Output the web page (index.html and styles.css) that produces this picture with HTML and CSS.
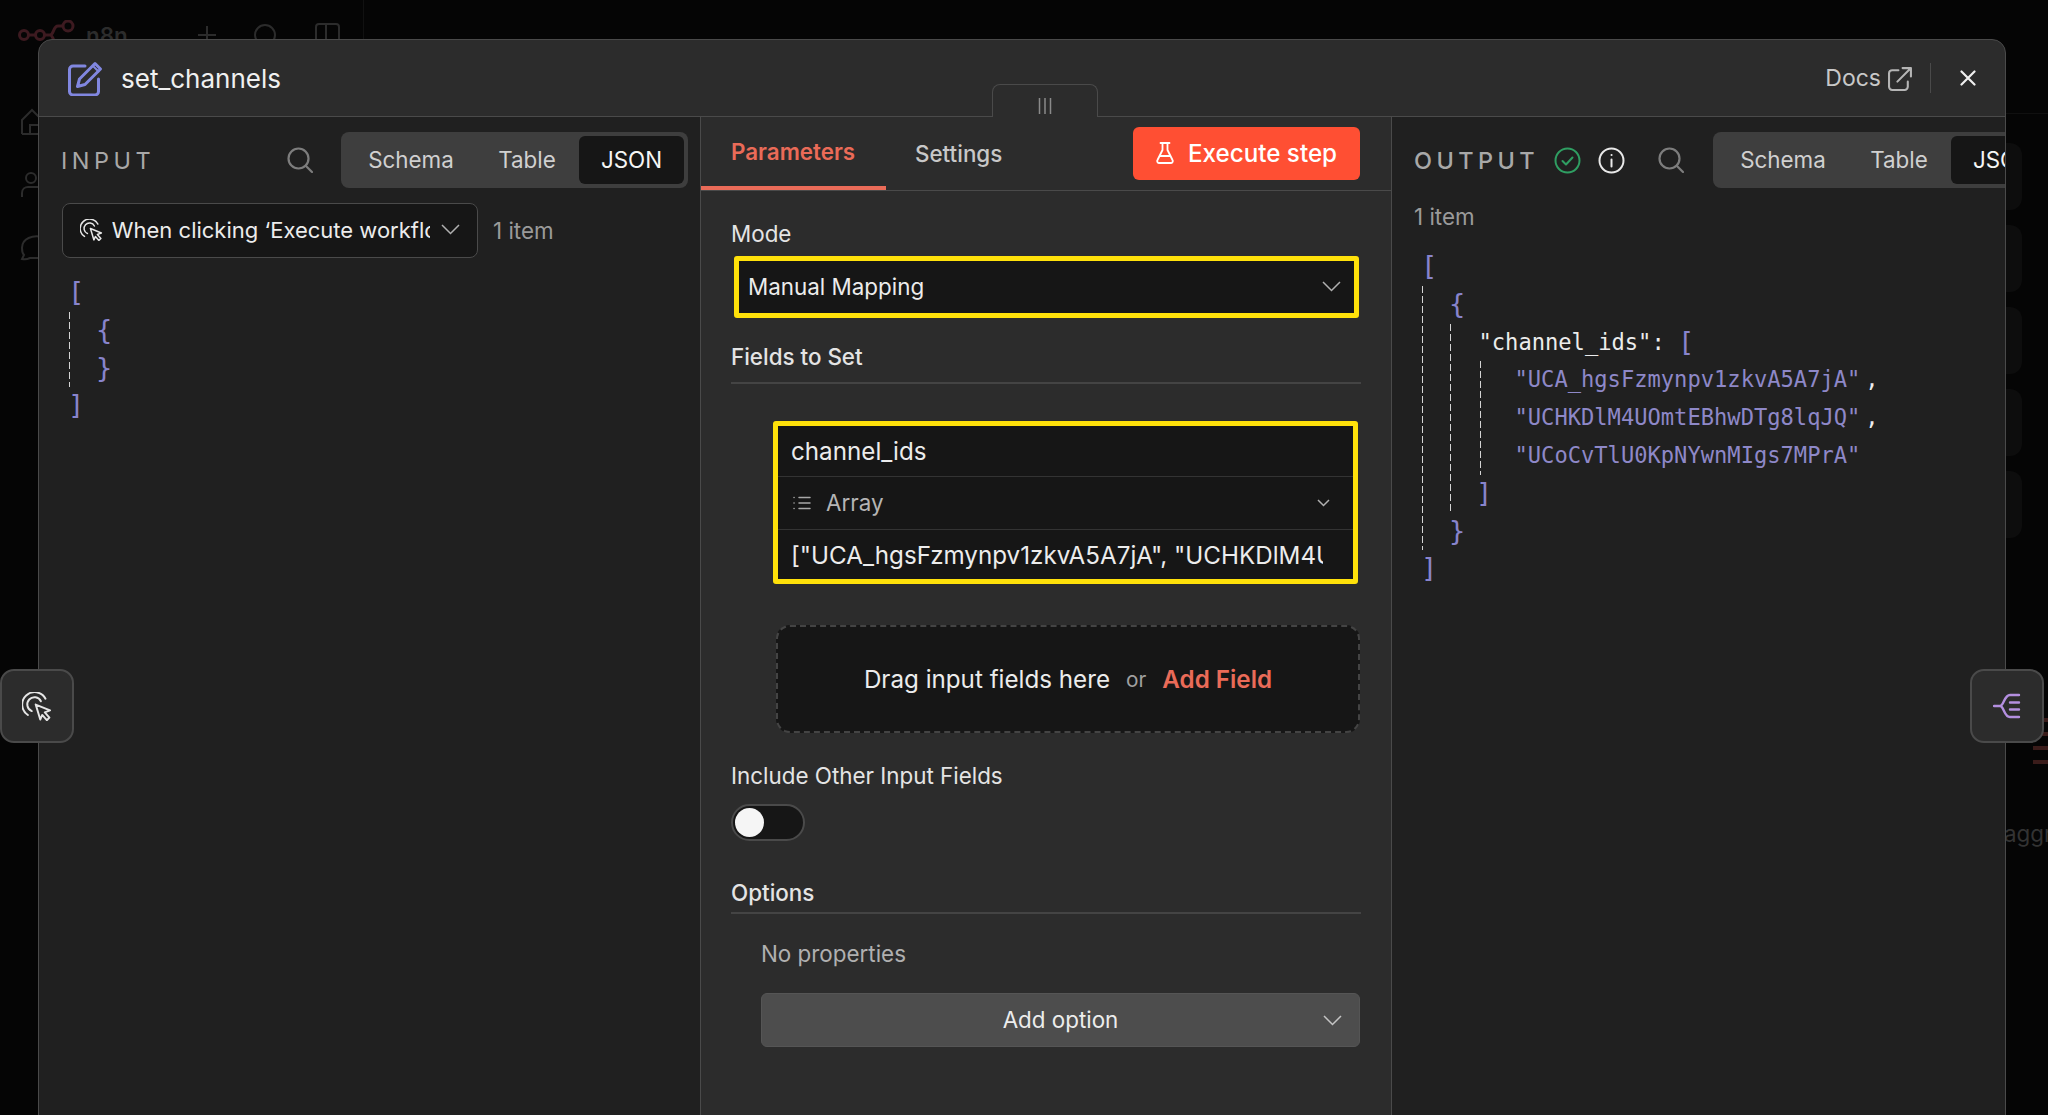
FILE: index.html
```html
<!DOCTYPE html>
<html lang="en">
<head>
    <meta charset="UTF-8">
    <meta name="viewport" content="width=device-width, initial-scale=1.0">
    <title>set_channels</title>
    <link rel="stylesheet" href="styles.css">
</head>
<body>
    <div class="backdrop">
        <div class="ghost-top">
            <svg class="ghost-logo" width="58" height="30" viewBox="0 0 58 30" fill="none" stroke="#3d1a20" stroke-width="3">
                <circle cx="6" cy="15" r="4.500"/><circle cx="22" cy="15" r="4.500"/><circle cx="50" cy="6" r="5"/>
                <path d="M11 15h6M27 15h5c4 0 3-9 8-9h5M32 15c4 0 3 10 8 10h5"/>
            </svg>
            <span class="ghost-name">n8n</span>
            <svg class="ghost-plus" width="20" height="20" viewBox="0 0 20 20" stroke="#2c2c2c" stroke-width="2"><path d="M10 1v18M1 10h18"/></svg>
            <svg class="ghost-search" width="24" height="24" viewBox="0 0 24 24" fill="none" stroke="#2c2c2c" stroke-width="2"><circle cx="12" cy="12" r="10"/></svg>
            <svg class="ghost-panel" width="26" height="24" viewBox="0 0 26 24" fill="none" stroke="#2c2c2c" stroke-width="2"><rect x="1" y="1" width="23" height="30" rx="3"/><path d="M11 1v30"/></svg>
        </div>
        <div class="ghost-side">
            <svg width="22" height="28" viewBox="0 0 22 28" fill="none" stroke="#2c2c2c" stroke-width="2"><path d="M2 26V12L12 2l10 10M2 26h20M10 26v-9h12"/></svg>
            <svg width="22" height="28" viewBox="0 0 22 28" fill="none" stroke="#2c2c2c" stroke-width="2"><circle cx="11" cy="7" r="5"/><path d="M2 26v-4c0-4 3-6 6-6h14"/></svg>
            <svg width="22" height="28" viewBox="0 0 22 28" fill="none" stroke="#2c2c2c" stroke-width="2"><path d="M22 3c-9-2-20 1-20 11 0 4 1 6 2 7l-2 4c4 1 6 0 8-1h12"/></svg>
        </div>
        <div class="ghost-rule"></div>
        <div class="ghost-cards">
            <div class="ghost-card"></div>
            <div class="ghost-card"></div>
            <div class="ghost-card"></div>
            <div class="ghost-card"></div>
            <div class="ghost-card"></div>
        </div>
        <div class="ghost-lines">
            <div></div>
            <div></div>
            <div></div>
            <div></div>
        </div>
        <div class="ghost-text">aggr</div>
    </div>

    <div class="modal">
        <header class="modal-head">
            <svg class="node-icon" width="36" height="36" viewBox="0 0 36 36" fill="none" stroke="#8187e0" stroke-width="3" stroke-linejoin="round" stroke-linecap="round">
                <path d="M17 6H5a3.500 3.500 0 0 0-3.500 3.500v22A3.500 3.500 0 0 0 5 35h22a3.500 3.500 0 0 0 3.500-3.500V19"/>
                <path d="M27 3.500 32.500 9 17 24.500l-7.500 2 2-7.500Z"/>
                <path d="M25 6l5.500 5.500" stroke-width="2"/>
            </svg>
            <div class="node-name">set_channels</div>
            <div class="docs">Docs</div>
            <svg class="docs-icon" width="25" height="25" viewBox="0 0 24 24" fill="none" stroke="#b5b5b5" stroke-width="2" stroke-linecap="round" stroke-linejoin="round">
                <path d="M10 4H4a3 3 0 0 0-3 3v13a3 3 0 0 0 3 3h12a3 3 0 0 0 3-3v-5"/>
                <path d="M9 15 22 2M14 2h8v8"/>
            </svg>
            <div class="head-divider"></div>
            <svg class="close-icon" width="16" height="16" viewBox="0 0 16 16" stroke="#f0f0f0" stroke-width="2.200" stroke-linecap="round"><path d="M1.500 1.500l13 13M14.500 1.500l-13 13"/></svg>
        </header>

        <div class="drag-tab">
            <svg width="14" height="16" viewBox="0 0 14 16" stroke="#8a8a8a" stroke-width="1.500"><path d="M1.500 0v16M7 0v16M12.500 0v16"/></svg>
        </div>

        <div class="modal-body">
            <section class="panel panel-input">
                <div class="panel-head">
                    <div class="panel-label">INPUT</div>
                    <svg class="search-icon" width="26" height="26" viewBox="0 0 26 26" fill="none" stroke="#7d7d7d" stroke-width="2.200" stroke-linecap="round"><circle cx="11.500" cy="11.500" r="10"/><path d="M19 19l6 6"/></svg>
                    <div class="view-tabs">
                        <div class="view-tab view-tab-schema">Schema</div>
                        <div class="view-tab view-tab-table">Table</div>
                        <div class="view-tab active">JSON</div>
                    </div>
                </div>
                <div class="source-row">
                    <div class="source-select">
                        <svg class="trigger-icon" width="23" height="22" viewBox="0 0 23 22" fill="none" stroke="#e6e6e6" stroke-width="1.500" stroke-linecap="round" stroke-linejoin="round">
                            <path d="M4.500 17.500A9.500 9.500 0 1 1 18 5"/>
                            <path d="M7.500 14.500A5.500 5.500 0 1 1 14.500 7"/>
                            <path d="M10.500 9.500 21.500 14l-4 1.500 3.500 4-2 2-3.500-4-1.500 3.500Z"/>
                        </svg>
                        <div class="source-text">When clicking ‘Execute workflow’</div>
                        <svg class="chevron" width="19" height="11" viewBox="0 0 19 11" fill="none" stroke="#b0b0b0" stroke-width="1.500"><path d="M1 1l8.500 8.500L18 1"/></svg>
                    </div>
                    <div class="item-count">1 item</div>
                </div>
                <div class="json">
                    <div class="jline"><span class="jb">[</span></div>
                    <div class="jblock">
                        <div class="jline"><span class="jb">{</span></div>
                        <div class="jline"><span class="jb">}</span></div>
                    </div>
                    <div class="jline"><span class="jb">]</span></div>
                </div>
            </section>

            <section class="panel panel-main">
                <div class="main-tabs">
                    <div class="main-tab active">Parameters</div>
                    <div class="main-tab">Settings</div>
                    <div class="execute">
                        <svg width="18" height="22" viewBox="0 0 18 22" fill="none" stroke="#fff" stroke-width="1.800" stroke-linejoin="round" stroke-linecap="round">
                            <path d="M4.500 1h9M6.500 1v7L1.500 18a2 2 0 0 0 2 3h11a2 2 0 0 0 2-3l-5-10V1M4 14h10"/>
                        </svg>
                        <span>Execute step</span>
                    </div>
                </div>
                <div class="params">
                    <div class="param-label label-mode">Mode</div>
                    <div class="mode-select">
                        <span>Manual Mapping</span>
                        <svg class="chevron" width="19" height="11" viewBox="0 0 19 11" fill="none" stroke="#b0b0b0" stroke-width="1.500"><path d="M1 1l8.500 8.500L18 1"/></svg>
                    </div>
                    <div class="section-label label-fields">Fields to Set</div>
                    <div class="field-box">
                        <div class="field-row field-name">channel_ids</div>
                        <div class="field-row field-type">
                            <svg width="18" height="14" viewBox="0 0 18 14" stroke="#a8a8a8" stroke-width="1.500" stroke-linecap="round"><path d="M6 1.500h11M6 7h11M6 12.500h11M1 1.500h.1M1 7h.1M1 12.500h.1"/></svg>
                            <span class="type-name">Array</span>
                            <svg class="type-chevron" width="13" height="8" viewBox="0 0 13 8" fill="none" stroke="#b0b0b0" stroke-width="1.500"><path d="M1 1l5.500 5.500L12 1"/></svg>
                        </div>
                        <div class="field-row field-value"><span>["UCA_hgsFzmynpv1zkvA5A7jA", "UCHKDlM4UOmtEBhwDTg8lqJQ", "UCoCvTlU0KpNYwnMIgs7MPrA"]</span></div>
                    </div>
                    <div class="dropzone">
                        <span class="drop-text">Drag input fields here</span>
                        <span class="drop-or">or</span>
                        <span class="drop-add">Add Field</span>
                    </div>
                    <div class="param-label label-include">Include Other Input Fields</div>
                    <div class="toggle"><div class="knob"></div></div>
                    <div class="section-label label-options">Options</div>
                    <div class="no-props">No properties</div>
                    <div class="add-option">
                        <span>Add option</span>
                        <svg class="chevron" width="19" height="11" viewBox="0 0 19 11" fill="none" stroke="#c4c4c4" stroke-width="1.500"><path d="M1 1l8.500 8.500L18 1"/></svg>
                    </div>
                </div>
            </section>

            <section class="panel panel-output">
                <div class="panel-head">
                    <div class="panel-label label-output">OUTPUT</div>
                    <svg class="ok-icon" width="27" height="27" viewBox="0 0 27 27" fill="none" stroke="#2f9e62" stroke-width="2" stroke-linecap="round" stroke-linejoin="round"><circle cx="13.500" cy="13.500" r="12"/><path d="M8.500 14l3.500 3.500 6.500-7"/></svg>
                    <svg class="info-icon" width="27" height="27" viewBox="0 0 27 27" fill="none" stroke="#e8e8e8" stroke-width="2" stroke-linecap="round"><circle cx="13.500" cy="13.500" r="12"/><path d="M13.500 12.500v7M13.500 8h.1"/></svg>
                    <svg class="search-icon search-output" width="26" height="26" viewBox="0 0 26 26" fill="none" stroke="#7d7d7d" stroke-width="2.200" stroke-linecap="round"><circle cx="11.500" cy="11.500" r="10"/><path d="M19 19l6 6"/></svg>
                    <div class="view-tabs">
                        <div class="view-tab view-tab-schema">Schema</div>
                        <div class="view-tab view-tab-table">Table</div>
                        <div class="view-tab active">JSON</div>
                    </div>
                </div>
                <div class="item-count output-count">1 item</div>
                <div class="json json-output">
                    <div class="jline"><span class="jb">[</span></div>
                    <div class="jblock">
                        <div class="jline"><span class="jb">{</span></div>
                        <div class="jblock jblock-inner">
                            <div class="jline"><span class="jkey jname">"channel_ids":</span> <span class="jb">[</span></div>
                            <div class="jblock jblock-strings">
                                <div class="jline">"UCA_hgsFzmynpv1zkvA5A7jA"<span class="jkey jcomma">,</span></div>
                                <div class="jline">"UCHKDlM4UOmtEBhwDTg8lqJQ"<span class="jkey jcomma">,</span></div>
                                <div class="jline">"UCoCvTlU0KpNYwnMIgs7MPrA"</div>
                            </div>
                            <div class="jline"><span class="jb">]</span></div>
                        </div>
                        <div class="jline"><span class="jb">}</span></div>
                    </div>
                    <div class="jline"><span class="jb">]</span></div>
                </div>
            </section>
        </div>
    </div>

    <div class="float-btn float-left">
        <svg width="30" height="29" viewBox="0 0 23 22" fill="none" stroke="#e6e6e6" stroke-width="1.500" stroke-linecap="round" stroke-linejoin="round">
            <path d="M4.500 17.500A9.500 9.500 0 1 1 18 5"/>
            <path d="M7.500 14.500A5.500 5.500 0 1 1 14.500 7"/>
            <path d="M10.500 9.500 21.500 14l-4 1.500 3.500 4-2 2-3.500-4-1.500 3.500Z"/>
        </svg>
    </div>
    <div class="float-btn float-right">
        <svg width="28" height="26" viewBox="0 0 28 26" fill="none" stroke="#b48fe0" stroke-width="2.400" stroke-linecap="round"><path d="M1 13h6c4 0 4-11 10-11h9M7 13c4 0 4 11 10 11h9M17 9.500h9M17 16.500h9"/></svg>
    </div>
</body>
</html>
```

FILE: styles.css
```css
body {
    margin: 0;
    height: 1115px;
    overflow: hidden;
    position: relative;
    background-color: #050505;
    font-family: Inter, "Noto Sans", sans-serif;
    font-size: 22.4px;
    color: #ececec;
}

/* page behind the modal, dimmed */
.backdrop {
    position: absolute;
    top: 0;
    left: 0;
    right: 0;
    bottom: 0;
    overflow: hidden;
}
.ghost-top {
    display: flex;
    align-items: center;
    width: 364px;
    height: 50px;
    padding: 20px 0 0 18px;
    box-sizing: border-box;
    border-right: 1px solid #111;
}
.ghost-name {
    margin-left: 10px;
    color: #2c2c2c;
    font-weight: 600;
}
.ghost-plus {
    margin-left: 69px;
}
.ghost-search {
    margin-left: 36px;
}
.ghost-panel {
    margin-left: 38px;
}
.ghost-side {
    display: flex;
    flex-direction: column;
    gap: 35px;
    padding: 58px 0 0 20px;
}
.ghost-rule {
    position: absolute;
    top: 113px;
    left: 2006px;
    right: 0;
    height: 1px;
    background-color: #101010;
}
.ghost-cards {
    position: absolute;
    top: 143px;
    left: 1960px;
    width: 62px;
    display: flex;
    flex-direction: column;
    gap: 15px;
}
.ghost-card {
    height: 67px;
    background-color: #0d0d0d;
    border-radius: 12px;
}
.ghost-lines {
    position: absolute;
    top: 718px;
    left: 2033px;
    right: 0;
    display: flex;
    flex-direction: column;
    gap: 10px;
}
.ghost-lines div {
    height: 4px;
    background-color: #3a1c1a;
}
.ghost-text {
    position: absolute;
    top: 820px;
    left: 2004px;
    color: #333;
    font-size: 22.4px;
}

/* modal */
.modal {
    position: relative;
    margin: 39px 0 0 38px;
    width: 1968px;
    height: 1100px;
    box-sizing: border-box;
    border: 1px solid #4a4a4a;
    border-radius: 14px 14px 0 0;
    background-color: #2c2c2c;
    overflow: hidden;
}
.modal-head {
    display: flex;
    align-items: center;
    height: 76px;
    padding: 0 29px 0 29px;
    border-bottom: 1px solid #4a4a4a;
}
.node-name {
    margin-left: 17px;
    font-size: 26px;
    color: #f0f0f0;
    flex-grow: 1;
}
.docs {
    color: #c8c8c8;
    font-size: 23px;
}
.docs-icon {
    margin-left: 7px;
}
.head-divider {
    width: 1px;
    height: 30px;
    margin: 0 29px 0 17px;
    background-color: #4a4a4a;
}
.drag-tab {
    position: absolute;
    top: 44px;
    left: 953px;
    width: 106px;
    height: 33px;
    box-sizing: border-box;
    border: 1px solid #4a4a4a;
    border-bottom: none;
    border-radius: 8px 8px 0 0;
    background-color: #2c2c2c;
    display: flex;
    justify-content: center;
    padding-top: 13px;
}
.modal-body {
    display: flex;
    height: 1022px;
}
.panel {
    flex-shrink: 0;
    box-sizing: border-box;
    background-color: #202020;
    overflow: hidden;
}
.panel-input {
    width: 661px;
}
.panel-main {
    width: 692px;
    background-color: #2c2c2c;
    border-left: 1px solid #4a4a4a;
    border-right: 1px solid #4a4a4a;
}
.panel-output {
    width: 613px;
}

/* input / output panels */
.panel-head {
    display: flex;
    align-items: center;
    height: 56px;
    margin-top: 15px;
    padding-left: 22px;
}
.panel-label {
    width: 110px;
    font-size: 23.5px;
    letter-spacing: 4.500px;
    color: #a8a8a8;
}
.search-icon {
    margin-left: 116px;
    flex-shrink: 0;
}
.view-tabs {
    display: flex;
    flex-shrink: 0;
    box-sizing: border-box;
    width: 347px;
    height: 56px;
    margin-left: 28px;
    padding: 4px;
    border-radius: 8px;
    background-color: #3e3e3e;
    color: #d0d0d0;
    font-size: 22.4px;
}
.view-tab {
    display: flex;
    align-items: center;
    justify-content: center;
    padding-bottom: 2px;
    box-sizing: border-box;
    border-radius: 6px;
}
.view-tab-schema {
    width: 130px;
    padding-left: 2px;
}
.view-tab-table {
    width: 104px;
}
.view-tab.active {
    width: 105px;
    background-color: #161616;
    color: #f5f5f5;
}
.source-row {
    display: flex;
    align-items: center;
    margin: 15px 0 0 23px;
}
.source-select {
    display: flex;
    align-items: center;
    width: 416px;
    height: 55px;
    box-sizing: border-box;
    padding: 0 17px 2px;
    border: 1px solid #4a4a4a;
    border-radius: 8px;
    background-color: #161616;
    font-size: 22px;
}
.source-text {
    width: 320px;
    margin-left: 9px;
    overflow: hidden;
    white-space: nowrap;
}
.source-select .chevron {
    margin-left: 11px;
    flex-shrink: 0;
}
.item-count {
    margin-left: 15px;
    padding-bottom: 1px;
    color: #9a9a9a;
    font-size: 22.4px;
}
.json {
    margin-top: 16px;
    padding-left: 29px;
    font-family: "DejaVu Sans Mono", "Liberation Mono", monospace;
    font-size: 22.1px;
    color: #8e88c8;
}
.jline {
    height: 37.800px;
    line-height: 37.800px;
    white-space: pre;
}
.jb {
    font-size: 27px;
    line-height: 0;
    vertical-align: -1px;
    color: #8884cc;
}
.jblock {
    margin-left: 1px;
    padding-left: 27px;
    background: repeating-linear-gradient(#d4d4d4 0, #d4d4d4 7px, transparent 7px, transparent 10px) left top / 1px 100% no-repeat;
}
.jblock-inner {
    margin-left: 1px;
    padding-left: 26px;
}
.jblock-strings {
    margin-left: 4px;
    padding-left: 34.500px;
}
.jkey {
    color: #ececec;
}
.jname {
    margin-left: 2.500px;
}
.jcomma {
    margin-left: 5px;
}
.label-output {
    width: 120px;
    font-weight: 500;
    letter-spacing: 4.400px;
    margin-right: 20px;
}
.ok-icon {
    flex-shrink: 0;
}
.info-icon {
    flex-shrink: 0;
    margin-left: 17px;
}
.search-output {
    margin-left: 33px;
}
.panel-output .view-tabs {
    margin-left: 29px;
}
.output-count {
    margin: 15px 0 0 22px;
    line-height: 28px;
}
.json-output {
    margin-top: 16px;
}

/* parameters panel */
.main-tabs {
    display: flex;
    align-items: center;
    height: 73px;
    border-bottom: 1px solid #4a4a4a;
    font-weight: 500;
    font-size: 22.4px;
    color: #c8c8c8;
}
.main-tab {
    display: flex;
    align-items: center;
    box-sizing: border-box;
    height: 73px;
    padding: 0 29px 0;
}
.main-tab.active {
    width: 185px;
    padding: 0 30px 0;
    color: #ea6b58;
    border-bottom: 4px solid #ea6b58;
    font-weight: 600;
}
.execute {
    display: flex;
    align-items: center;
    justify-content: center;
    gap: 14px;
    width: 227px;
    height: 53px;
    margin-left: auto;
    margin-right: 31px;
    margin-top: -1px;
    border-radius: 6px;
    background-color: #ff4f33;
    color: #fff;
    font-size: 24.2px;
}
.params {
    display: flex;
    flex-direction: column;
    padding: 0 30px 0 30px;
}
.param-label,
.section-label {
    line-height: 28px;
    font-size: 22.4px;
    color: #e4e4e4;
}
.section-label {
    box-sizing: border-box;
    border-bottom: 2px solid #444;
    font-weight: 500;
}
.label-mode {
    margin-top: 29px;
}
.mode-select {
    display: flex;
    align-items: center;
    justify-content: space-between;
    flex-shrink: 0;
    box-sizing: border-box;
    width: 625px;
    height: 62px;
    margin: 8px 0 0 3px;
    padding: 0 13px 2px 9px;
    border: 5px solid #ffe10a;
    border-radius: 3px;
    background-color: #161616;
}
.label-fields {
    margin-top: 25px;
    height: 41px;
}
.field-box {
    box-sizing: border-box;
    width: 585px;
    height: 163px;
    margin: 37px 0 0 42px;
    border: 5px solid #ffe10a;
    border-radius: 3px;
    background-color: #161616;
    display: flex;
    flex-direction: column;
    font-size: 24.2px;
}
.field-row {
    display: flex;
    align-items: center;
    padding: 0 13px;
    flex-shrink: 0;
}
.field-name {
    height: 50px;
    border-bottom: 1px solid #333;
}
.field-type {
    height: 53px;
    padding-bottom: 1px;
    box-sizing: border-box;
    border-bottom: 1px solid #333;
    color: #b4b4b4;
    font-size: 22.4px;
}
.field-type svg:first-child {
    margin-left: 2px;
}
.type-name {
    margin-left: 15px;
}
.type-chevron {
    margin-left: auto;
    margin-right: 10px;
}
.field-value {
    height: 48px;
    padding-top: 2px;
    box-sizing: border-box;
}
.field-value span {
    width: 532px;
    overflow: hidden;
    white-space: nowrap;
}
.dropzone {
    display: flex;
    align-items: center;
    justify-content: center;
    box-sizing: border-box;
    width: 584px;
    height: 108px;
    margin: 41px 0 0 45px;
    border: 2px dashed #444;
    border-radius: 14px;
    background-color: #161616;
    font-size: 24.2px;
}
.drop-or {
    margin: 0 16px;
    color: #a0a0a0;
    font-size: 20.800px;
}
.drop-add {
    color: #ea6b58;
    font-weight: 600;
}
.label-include {
    margin-top: 29px;
}
.toggle {
    box-sizing: border-box;
    width: 74px;
    height: 37px;
    margin-top: 14px;
    padding: 2px;
    border: 2px solid #4a4a4a;
    border-radius: 19px;
    background-color: #161616;
}
.knob {
    width: 29px;
    height: 29px;
    border-radius: 50%;
    background-color: #f5f5f5;
}
.label-options {
    margin-top: 38px;
    height: 35px;
}
.no-props {
    margin: 26px 0 0 30px;
    line-height: 28px;
    color: #b0b0b0;
}
.add-option {
    position: relative;
    display: flex;
    align-items: center;
    justify-content: center;
    box-sizing: border-box;
    width: 599px;
    height: 54px;
    margin: 25px 0 0 30px;
    border: 1px solid #555;
    border-radius: 6px;
    background-color: #4d4d4d;
    padding-bottom: 2px;
}
.add-option .chevron {
    position: absolute;
    right: 17px;
    top: 21px;
}

/* round tabs on the edges of the modal */
.float-btn {
    position: absolute;
    top: 669px;
    display: flex;
    align-items: center;
    justify-content: center;
    box-sizing: border-box;
    width: 74px;
    height: 74px;
    border: 2px solid #4a4a4a;
    border-radius: 14px;
    background-color: #2c2c2c;
}
.float-left {
    left: 0;
}
.float-right {
    left: 1970px;
}
```
